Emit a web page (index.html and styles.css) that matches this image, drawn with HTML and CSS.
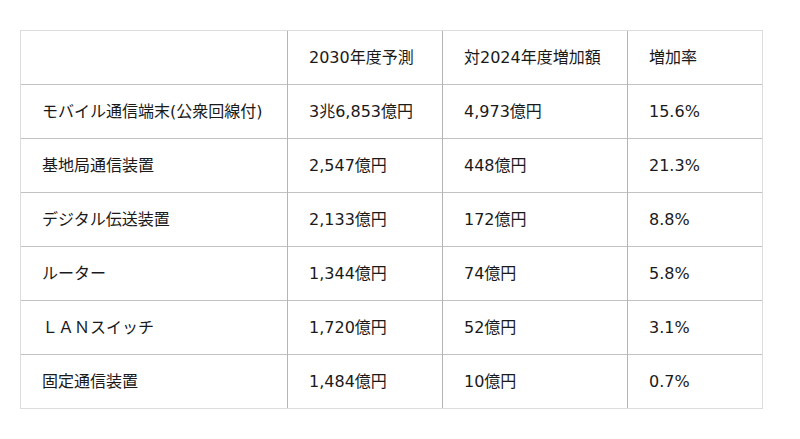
FILE: index.html
```html
<!DOCTYPE html>
<html lang="ja">
<head>
<meta charset="utf-8">
<link rel="stylesheet" href="styles.css">
</head>
<body>
<div class="wrap">
<table class="data">
<colgroup>
<col class="c1"><col class="c2"><col class="c3"><col class="c4">
</colgroup>
<thead>
<tr><th></th><th>2030年度予測</th><th>対2024年度増加額</th><th>増加率</th></tr>
</thead>
<tbody>
<tr><td>モバイル通信端末(公衆回線付)</td><td>3兆6,853億円</td><td>4,973億円</td><td>15.6%</td></tr>
<tr><td>基地局通信装置</td><td>2,547億円</td><td>448億円</td><td>21.3%</td></tr>
<tr><td>デジタル伝送装置</td><td>2,133億円</td><td>172億円</td><td>8.8%</td></tr>
<tr><td>ルーター</td><td>1,344億円</td><td>74億円</td><td>5.8%</td></tr>
<tr><td>ＬＡＮスイッチ</td><td>1,720億円</td><td>52億円</td><td>3.1%</td></tr>
<tr><td>固定通信装置</td><td>1,484億円</td><td>10億円</td><td>0.7%</td></tr>
</tbody>
</table>
</div>
</body>
</html>
```
FILE: styles.css
```css
html, body {
  margin: 0;
  padding: 0;
  background: #fff;
}
.wrap {
  padding: 30px 0 0 20px;
}
.data {
  border-collapse: collapse;
  width: 742px;
  table-layout: fixed;
  font-family: "DejaVu Sans", "Noto Sans CJK JP", sans-serif;
  font-size: 16px;
  line-height: 20px;
  color: #1a1a1a;
  border: 1px solid #dcdcdc;
}
.c1 { width: 267px; }
.c2 { width: 155px; }
.c3 { width: 185px; }
.c4 { width: 135px; }
.data th, .data td {
  height: 52px;
  padding: 1px 0 0 21px;
  text-align: left;
  font-weight: normal;
  border-top: 1px solid #c2c2c2;
  border-left: 1px solid #b5b5b5;
  vertical-align: middle;
  white-space: nowrap;
}
.data thead th {
  border-top: 1px solid #dcdcdc;
}
.data th:first-child, .data td:first-child {
  border-left: 1px solid #dcdcdc;
}
.data tr > :last-child {
  border-right: 1px solid #dcdcdc;
}
.data tbody tr:last-child td {
  border-bottom: 1px solid #dcdcdc;
}
```
